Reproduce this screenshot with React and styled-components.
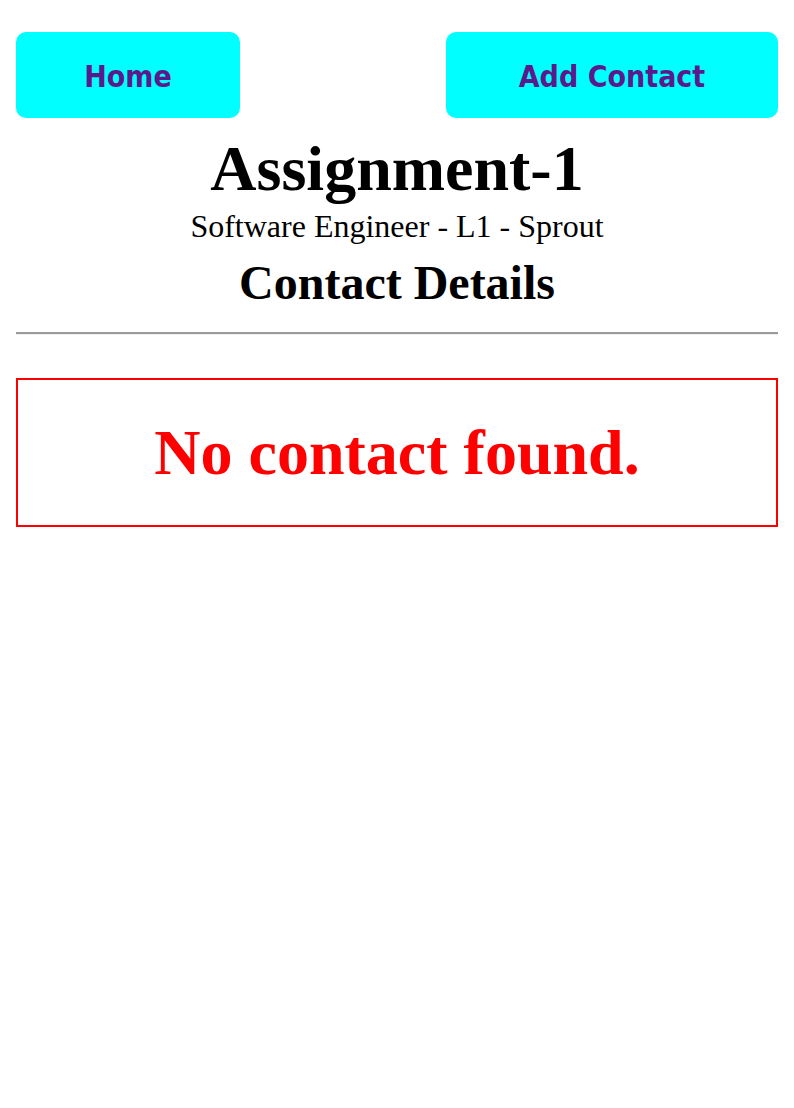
import React from "react";
import styled, { createGlobalStyle } from "styled-components";

const Global = createGlobalStyle`
  html, body { margin: 0; padding: 0; background: #fff; }
  body { font-family: "Liberation Serif", "Times New Roman", serif; }
`;

const Page = styled.div`
  padding: 32px 16px 0 16px;
  display: flex;
  flex-direction: column;
`;

const NavBar = styled.nav`
  display: flex;
  justify-content: space-between;
  align-items: center;
`;

const NavButton = styled.button`
  width: ${(p) => p.$width}px;
  height: 86px;
  background: #00ffff;
  border: none;
  border-radius: 10px;
  color: #5b1a8c;
  font-family: "DejaVu Sans Condensed", "DejaVu Sans", sans-serif;
  font-weight: bold;
  font-size: 30px;
  line-height: 36px;
  padding: 4px 0 0 0;
  cursor: pointer;
`;

const Header = styled.header`
  display: flex;
  flex-direction: column;
  align-items: center;
  text-align: center;
`;

const Title = styled.h1`
  margin: 16px 0 0 0;
  font-size: 64px;
  line-height: 70px;
  font-weight: bold;
`;

const Subtitle = styled.p`
  margin: 4px 0 0 0;
  font-size: 32px;
  line-height: 36px;
`;

const Heading = styled.h2`
  margin: 12px 0 0 0;
  font-size: 48px;
  line-height: 54px;
  font-weight: bold;
`;

const Divider = styled.hr`
  margin: 22px 0 0 0;
  border: none;
  border-top: 2px solid #9a9a9a;
  border-bottom: 1px solid #eeeeee;
  height: 0;
`;

const EmptyBox = styled.div`
  margin-top: 43px;
  border: 2px solid #ff0000;
  height: 145px;
  display: flex;
  align-items: center;
  justify-content: center;
`;

const EmptyText = styled.h2`
  margin: 0;
  color: #ff0000;
  font-size: 64px;
  font-weight: bold;
`;

export default function App() {
  return (
    <>
      <Global />
      <Page>
        <NavBar>
          <NavButton $width={224}>Home</NavButton>
          <NavButton $width={332}>Add Contact</NavButton>
        </NavBar>
        <Header>
          <Title>Assignment-1</Title>
          <Subtitle>Software Engineer - L1 - Sprout</Subtitle>
          <Heading>Contact Details</Heading>
        </Header>
        <Divider />
        <EmptyBox>
          <EmptyText>No contact found.</EmptyText>
        </EmptyBox>
      </Page>
    </>
  );
}
